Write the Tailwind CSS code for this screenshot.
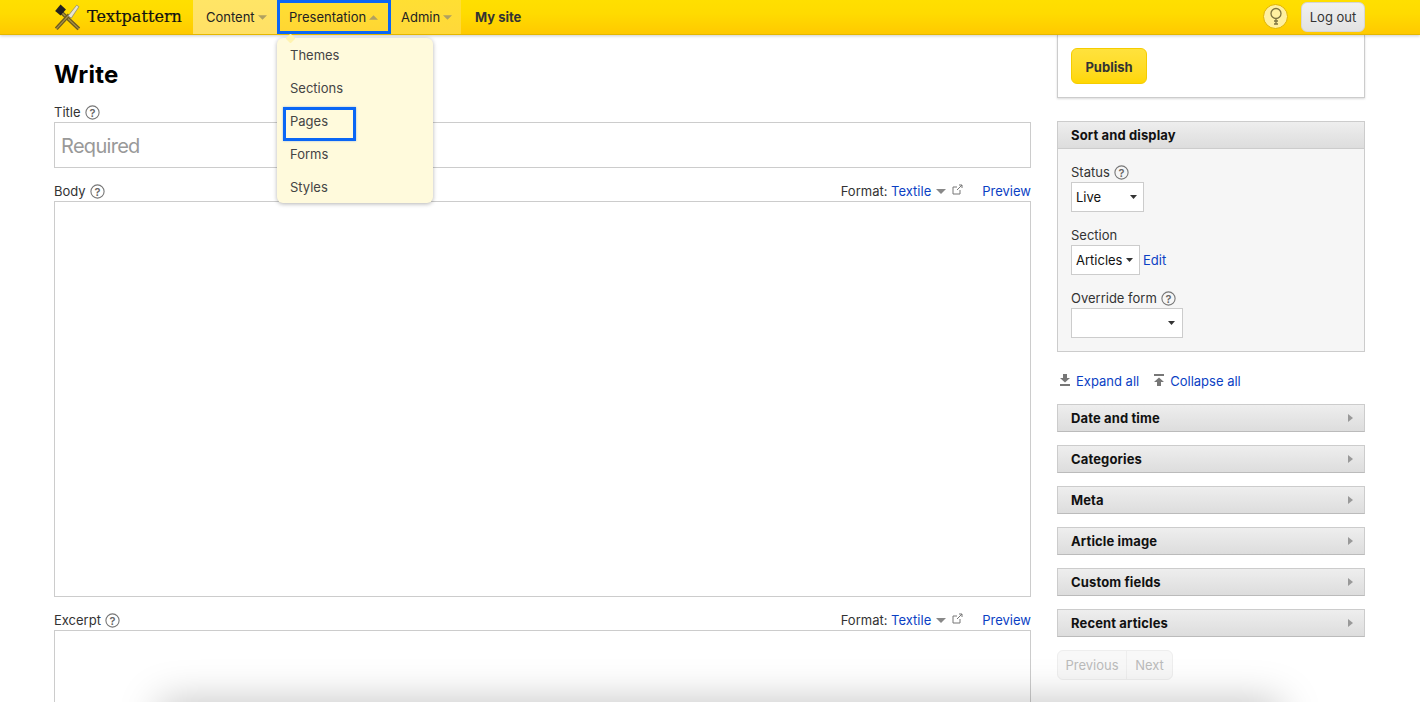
<!DOCTYPE html>
<html lang="en">
<head>
    <meta charset="utf-8">
    <title>Write - Textpattern</title>
    <script src="https://cdn.jsdelivr.net/npm/@tailwindcss/browser@4"></script>
</head>
<body class="bg-white font-['Inter',sans-serif] text-[13px] leading-[16px] text-[#333]">
    <div class="relative h-[702px] overflow-hidden">

        <header class="relative z-10 flex h-[35px] items-stretch border-b border-[#e5b700] bg-[linear-gradient(#ffdf00,#ffdb00_40%,#ffc900)] pl-[54px] pr-[55px] shadow-[0_1px_3px_rgba(0,0,0,0.2)]">
            <a class="flex w-[139px] items-center gap-[6px]">
                <svg class="-ml-[1px] mb-[1px] h-[28px] w-[28px]" viewBox="0 0 26 26">
                    <path d="M6 7 L24 24" stroke="#6b5a1e" stroke-width="3.5" />
                    <path d="M6 7 L24 24" stroke="#a8924a" stroke-width="1.2" />
                    <path d="M2 7.5 L7 1.5 L12 6 L7 11.5 Z" fill="#222" />
                    <path d="M3 24 L15 11" stroke="#6b5a1e" stroke-width="3.5" />
                    <path d="M3 24 L15 11" stroke="#a8924a" stroke-width="1.2" />
                    <path d="M14 12 L22 2 L24 3.5 L17 14 Z" fill="#e8e4d0" stroke="#777" stroke-width="0.6" />
                </svg>
                <span class="font-['DejaVu_Serif',serif] text-[16px] tracking-[0.05px] text-[#111] [-webkit-text-stroke:0.2px_#111]">Textpattern</span>
            </a>
            <a class="flex w-[84px] items-center gap-[3px] bg-gradient-to-b from-[#ffe566] to-[#ffe066] pl-[13px] text-[#222]">Content
                <svg class="h-[5px] w-[9px]" viewBox="0 0 8 4"><path d="M0 0H8L4 4Z" fill="#b0a060" /></svg>
            </a>
            <a class="flex w-[114px] items-center gap-[3px] border-[3px] border-[#0a66f5] bg-gradient-to-b from-[#ffdf33] to-[#ffd633] pl-[9px] text-[#222]">Presentation
                <svg class="h-[5px] w-[9px]" viewBox="0 0 8 4"><path d="M0 4H8L4 0Z" fill="#b0a060" /></svg>
            </a>
            <a class="flex w-[70px] items-center gap-[3px] bg-gradient-to-b from-[#ffdf33] to-[#ffd83a] pl-[10px] text-[#222]">Admin
                <svg class="h-[5px] w-[9px]" viewBox="0 0 8 4"><path d="M0 0H8L4 4Z" fill="#b0a060" /></svg>
            </a>
            <a class="flex items-center pl-[14px] font-bold text-[#333]">My site</a>
            <div class="ml-auto flex items-center pb-[1px]">
                <span class="flex h-[25px] w-[25px] items-center justify-center rounded-full border border-[#e0b400] bg-[#fff0a0]">
                    <svg class="h-[20px] w-[14px]" viewBox="0 0 14 20" fill="none" stroke="#7d7340" stroke-width="1.3">
                        <circle cx="7" cy="6.5" r="5" />
                        <path d="M7 11.5v6M5 14h4M5 17h4" />
                    </svg>
                </span>
                <a class="ml-[13px] flex h-[30px] w-[64px] items-center justify-center rounded-[6px] border border-[#d5d5d5] bg-gradient-to-b from-[#f0f0f0] to-[#e2e2e2] text-[#333]">Log out</a>
            </div>
        </header>

        <nav class="absolute top-[38px] left-[277px] z-20 flex w-[156px] flex-col rounded-[6px] bg-[#fffadc] shadow-[0_1px_4px_rgba(0,0,0,0.3)]">
            <span class="absolute -top-[3px] left-[10px] h-[7px] w-[7px] rotate-45 rounded-[1px] bg-[#fff3b0]"></span>
            <a class="relative flex h-[33px] items-center pl-[13px] text-[#444]">Themes</a>
            <a class="flex h-[33px] items-center pl-[13px] text-[#444]">Sections</a>
            <a class="flex h-[33px] items-center pl-[13px] text-[#444]">Pages</a>
            <a class="flex h-[33px] items-center pl-[13px] text-[#444]">Forms</a>
            <a class="flex h-[33px] items-center pl-[13px] text-[#444]">Styles</a>
        </nav>
        <div class="absolute top-[107px] left-[283px] z-20 h-[34px] w-[73px] border-[3px] border-[#0a66f5] shadow-[0_0_2px_rgba(10,102,245,0.4)]"></div>

        <main class="flex gap-[26px] pl-[54px]">
            <section class="w-[977px] shrink-0">
                <h1 class="mt-[25px] text-[24px] leading-[30px] font-bold tracking-[0.25px] text-black">Write</h1>
                <div class="mt-[14px] flex h-[16px] items-center gap-[4px]">Title
                    <svg class="h-[15px] w-[15px]" viewBox="0 0 15 15"><circle cx="7.5" cy="7.5" r="6.6" fill="none" stroke="#777" stroke-width="1.1" /><text x="7.5" y="11.5" text-anchor="middle" font-size="11" font-weight="600" fill="#666">?</text></svg>
                </div>
                <div class="mt-[2px] flex h-[46px] items-center border border-[#ccc] pt-[2px] pl-[6px] text-[20px] tracking-[-0.7px] text-[#999]">Required</div>
                <div class="mt-[15px] flex h-[16px] items-center justify-between">
                    <div class="flex items-center gap-[4px]">Body
                        <svg class="h-[15px] w-[15px]" viewBox="0 0 15 15"><circle cx="7.5" cy="7.5" r="6.6" fill="none" stroke="#777" stroke-width="1.1" /><text x="7.5" y="11.5" text-anchor="middle" font-size="11" font-weight="600" fill="#666">?</text></svg>
                    </div>
                    <div class="flex items-center">Format:&nbsp;<a class="text-[#0b3fc4]">Textile</a>
                        <svg class="ml-[5px] h-[5px] w-[10px]" viewBox="0 0 10 5"><path d="M0 0H10L5 5Z" fill="#888" /></svg>
                        <svg class="mb-[3px] ml-[6px] h-[11px] w-[11px]" viewBox="0 0 11 11" fill="none" stroke="#777"><path d="M8 6v4H1V3h4M5 6l5-5M7 1h3v3" /></svg>
                        <a class="ml-[19px] text-[#0b3fc4]">Preview</a>
                    </div>
                </div>
                <div class="mt-[2px] h-[396px] border border-[#ccc]"></div>
                <div class="mt-[15px] flex h-[16px] items-center justify-between">
                    <div class="flex items-center gap-[4px]">Excerpt
                        <svg class="h-[15px] w-[15px]" viewBox="0 0 15 15"><circle cx="7.5" cy="7.5" r="6.6" fill="none" stroke="#777" stroke-width="1.1" /><text x="7.5" y="11.5" text-anchor="middle" font-size="11" font-weight="600" fill="#666">?</text></svg>
                    </div>
                    <div class="flex items-center">Format:&nbsp;<a class="text-[#0b3fc4]">Textile</a>
                        <svg class="ml-[5px] h-[5px] w-[10px]" viewBox="0 0 10 5"><path d="M0 0H10L5 5Z" fill="#888" /></svg>
                        <svg class="mb-[3px] ml-[6px] h-[11px] w-[11px]" viewBox="0 0 11 11" fill="none" stroke="#777"><path d="M8 6v4H1V3h4M5 6l5-5M7 1h3v3" /></svg>
                        <a class="ml-[19px] text-[#0b3fc4]">Preview</a>
                    </div>
                </div>
                <div class="mt-[2px] h-[120px] border border-[#ccc]"></div>
            </section>

            <aside class="w-[308px] shrink-0">
                <div class="h-[63px] border border-t-0 border-[#ccc] pt-[13px] pl-[13px] shadow-[0_1px_2px_rgba(0,0,0,0.15)]">
                    <button class="h-[36px] w-[76px] rounded-[6px] border border-[#f5cc00] bg-gradient-to-b from-[#ffe23c] to-[#ffd700] pt-[2px] font-bold text-[#333]">Publish</button>
                </div>

                <div class="mt-[23px] h-[231px] border border-[#ccc] bg-[#f6f6f6]">
                    <h3 class="flex h-[27px] items-center border-b border-[#ccc] bg-gradient-to-b from-[#eeeeee] to-[#dddddd] pl-[13px] font-bold tracking-[0.13px] text-[#111]">Sort and display</h3>
                    <div class="mt-[15px] flex h-[16px] items-center gap-[4px] pl-[13px]">Status
                        <svg class="h-[15px] w-[15px]" viewBox="0 0 15 15"><circle cx="7.5" cy="7.5" r="6.6" fill="none" stroke="#777" stroke-width="1.1" /><text x="7.5" y="11.5" text-anchor="middle" font-size="11" font-weight="600" fill="#666">?</text></svg>
                    </div>
                    <div class="mt-[2px] ml-[13px] flex h-[30px] w-[73px] items-center justify-between border border-[#ccc] bg-white pr-[6px] pl-[4px] text-[#111]">Live
                        <svg class="h-[4px] w-[7px]" viewBox="0 0 7 4"><path d="M0 0H7L3.5 4Z" fill="#333" /></svg>
                    </div>
                    <div class="mt-[15px] h-[16px] pl-[13px]">Section</div>
                    <div class="mt-[2px] ml-[13px] flex items-center gap-[3px]">
                        <div class="flex h-[30px] w-[69px] items-center justify-between border border-[#ccc] bg-white pr-[6px] pl-[4px] text-[#111]">Articles
                            <svg class="h-[4px] w-[7px]" viewBox="0 0 7 4"><path d="M0 0H7L3.5 4Z" fill="#333" /></svg>
                        </div>
                        <a class="text-[#0b3fc4]">Edit</a>
                    </div>
                    <div class="mt-[15px] flex h-[16px] items-center gap-[4px] pl-[13px]">Override form
                        <svg class="h-[15px] w-[15px]" viewBox="0 0 15 15"><circle cx="7.5" cy="7.5" r="6.6" fill="none" stroke="#777" stroke-width="1.1" /><text x="7.5" y="11.5" text-anchor="middle" font-size="11" font-weight="600" fill="#666">?</text></svg>
                    </div>
                    <div class="mt-[2px] ml-[13px] flex h-[30px] w-[112px] items-center justify-end border border-[#ccc] bg-white pr-[7px]">
                        <svg class="h-[4px] w-[7px]" viewBox="0 0 7 4"><path d="M0 0H7L3.5 4Z" fill="#333" /></svg>
                    </div>
                </div>

                <div class="mt-[21px] flex h-[16px] items-center pl-[3px] text-[#0b3fc4]">
                    <svg class="mr-[6px] mb-[2px] h-[12px] w-[10px]" viewBox="0 0 10 12"><path d="M3 0H7V4H10L5 8.5L0 4H3ZM0 10H10V12H0Z" fill="#777" /></svg>
                    <a>Expand all</a>
                    <svg class="mr-[6px] mb-[2px] ml-[15px] h-[12px] w-[10px]" viewBox="0 0 10 12"><path d="M0 0H10V2H0ZM5 3.5L10 8H7V12H3V8H0Z" fill="#777" /></svg>
                    <a>Collapse all</a>
                </div>

                <div class="mt-[15px] flex flex-col gap-[13px] tracking-[0.13px]">
                    <div class="flex h-[28px] items-center justify-between border border-[#ccc] border-b-[#bbb] bg-gradient-to-b from-[#eeeeee] to-[#dddddd] pr-[11px] pl-[13px] font-bold text-[#111]">Date and time
                        <svg class="h-[8px] w-[5px]" viewBox="0 0 5 8"><path d="M0 0V8L5 4Z" fill="#999" /></svg>
                    </div>
                    <div class="flex h-[28px] items-center justify-between border border-[#ccc] border-b-[#bbb] bg-gradient-to-b from-[#eeeeee] to-[#dddddd] pr-[11px] pl-[13px] font-bold text-[#111]">Categories
                        <svg class="h-[8px] w-[5px]" viewBox="0 0 5 8"><path d="M0 0V8L5 4Z" fill="#999" /></svg>
                    </div>
                    <div class="flex h-[28px] items-center justify-between border border-[#ccc] border-b-[#bbb] bg-gradient-to-b from-[#eeeeee] to-[#dddddd] pr-[11px] pl-[13px] font-bold text-[#111]">Meta
                        <svg class="h-[8px] w-[5px]" viewBox="0 0 5 8"><path d="M0 0V8L5 4Z" fill="#999" /></svg>
                    </div>
                    <div class="flex h-[28px] items-center justify-between border border-[#ccc] border-b-[#bbb] bg-gradient-to-b from-[#eeeeee] to-[#dddddd] pr-[11px] pl-[13px] font-bold text-[#111]">Article image
                        <svg class="h-[8px] w-[5px]" viewBox="0 0 5 8"><path d="M0 0V8L5 4Z" fill="#999" /></svg>
                    </div>
                    <div class="flex h-[28px] items-center justify-between border border-[#ccc] border-b-[#bbb] bg-gradient-to-b from-[#eeeeee] to-[#dddddd] pr-[11px] pl-[13px] font-bold text-[#111]">Custom fields
                        <svg class="h-[8px] w-[5px]" viewBox="0 0 5 8"><path d="M0 0V8L5 4Z" fill="#999" /></svg>
                    </div>
                    <div class="flex h-[28px] items-center justify-between border border-[#ccc] border-b-[#bbb] bg-gradient-to-b from-[#eeeeee] to-[#dddddd] pr-[11px] pl-[13px] font-bold text-[#111]">Recent articles
                        <svg class="h-[8px] w-[5px]" viewBox="0 0 5 8"><path d="M0 0V8L5 4Z" fill="#999" /></svg>
                    </div>
                </div>

                <div class="mt-[13px] flex h-[30px] w-[116px] rounded-[6px] border border-[#eee] bg-[#f8f8f8] text-[#bbb]">
                    <span class="flex w-[69px] items-center justify-center border-r border-[#eee]">Previous</span>
                    <span class="flex flex-1 items-center justify-center">Next</span>
                </div>
            </aside>
        </main>

        <!-- footer shadow coming up from below the fold -->
        <div class="absolute top-[712px] left-[170px] z-10 h-[20px] w-[1100px] shadow-[0_0_40px_10px_rgba(0,0,0,0.25)]"></div>
    </div>
</body>
</html>
